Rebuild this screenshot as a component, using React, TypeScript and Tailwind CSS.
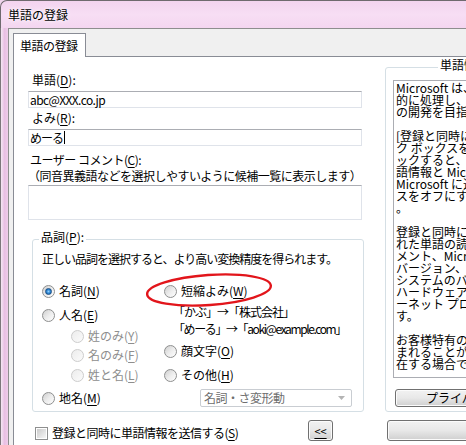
import clsx from "clsx";
import type { ReactNode } from "react";

// Windows 7 style "単語の登録" dialog (Microsoft IME), cropped at the right edge.

const infoLines = [
  "Microsoft は、送信された情報を統計",
  "的に処理し、その結果を品質向上や新機能",
  "の開発を目指します。",
  "",
  "[登録と同時に単語情報を送信する] チェッ",
  "ク ボックスをオンにして [登録] をクリ",
  "ックすると、単語の読み、単語、品詞の単",
  "語情報と Microsoft IME の情報が",
  "Microsoft に送信されます。チェック ボック",
  "スをオフにすれば情報は送信されません",
  "。",
  "",
  "登録と同時に送信される情報には、登録さ",
  "れた単語の読み、単語、品詞、ユーザー コ",
  "メント、Microsoft IME のバージョン、",
  "バージョン、使用している OS の",
  "システムのバージョン、コンピューターの",
  "ハードウェアの情報、およびインター",
  "ーネット プロトコル (IP) アドレスが含まれま",
  "す。",
  "",
  "お客様特有の情報が単語情報に含",
  "まれることがありますが、それらが存",
  "在する場合でも、個人を特定するために",
];

function U({ children }: { children: ReactNode }) {
  return <span className="underline decoration-1 underline-offset-[2px]">{children}</span>;
}

function Radio({ checked, disabled }: { checked?: boolean; disabled?: boolean }) {
  return (
    <span
      className={clsx(
        "flex h-[13px] w-[13px] shrink-0 items-center justify-center rounded-full border",
        disabled
          ? "border-[#cdcdcd] bg-linear-to-br from-[#ececec] to-[#fbfbfb]"
          : "border-[#8e8f8f] bg-linear-to-br from-[#cfcfcf] via-[#ececec] to-[#ffffff]"
      )}
    >
      {checked && (
        <span className="h-[7px] w-[7px] rounded-full border border-[#1b4f86] bg-radial from-[#8fd0ff] via-[#2b86d2] to-[#195ea6]" />
      )}
    </span>
  );
}

function Option({
  label,
  checked,
  disabled,
  className,
}: {
  label: ReactNode;
  checked?: boolean;
  disabled?: boolean;
  className?: string;
}) {
  return (
    <div className={clsx("flex h-[16px] items-center gap-[4px]", disabled && "text-[#8e8e8e]", className)}>
      <Radio checked={checked} disabled={disabled} />
      <span className="whitespace-nowrap">{label}</span>
    </div>
  );
}

function Field({ children, className }: { children?: ReactNode; className?: string }) {
  return (
    <div
      className={clsx(
        "flex h-[17px] w-[334px] items-center border border-[#dfe3ea] border-t-[#abadb3] bg-white pl-[1px] leading-[15px]",
        className
      )}
    >
      {children}
    </div>
  );
}

function Button({ children, className }: { children?: ReactNode; className?: string }) {
  return (
    <div
      className={clsx(
        "flex items-center justify-center rounded-[3px] border border-[#707070] bg-linear-to-b from-[#f2f2f2] via-[#e8e8e8] to-[#cfcfcf] shadow-[inset_0_0_0_1px_#fbfbfb]",
        className
      )}
    >
      {children}
    </div>
  );
}

export default function App() {
  return (
    <div className="relative h-[445px] w-[466px] overflow-hidden bg-[#efd4ec] text-[12px] leading-[16px] text-black font-['Noto_Sans_CJK_JP','Noto_Sans',sans-serif]">
      {/* title bar */}
      <div className="flex h-[28px] items-center rounded-tl-[7px] border-l border-t border-[#6f6a6e] bg-linear-to-b from-[#f3d4ef] via-[#f7def4] to-[#f4d6f0] pl-[7px]">
        <span className="[text-shadow:0_0_5px_#fff,0_0_2px_#fff]">単語の登録</span>
      </div>

      <div className="flex h-[417px]">
        <div className="w-[8px] shrink-0 border-l border-[#7d777b] bg-linear-to-r from-[#f5e7f3] via-[#e9bfe3] to-[#efcdea]" />
        <div className="flex min-w-0 flex-1 flex-col border-l border-t border-[#8e8e8e] bg-[#f0f0f0] pl-[4px] pt-[4px]">
          {/* tab strip */}
          <div className="flex">
            <div className="relative z-10 -mb-px flex h-[24px] items-center border border-b-0 border-[#898c95] bg-white pl-[6px] pr-[7px] tracking-[-0.5px]">
              単語の登録
            </div>
          </div>

          {/* tab page */}
          <div className="flex flex-1 border-l border-t border-[#898c95] bg-white pl-[14px]">
            {/* left column */}
            <div className="mt-[15px] w-[336px] shrink-0">
              <div className="h-[16px] pl-[4px]">
                単語(<U>D</U>):
              </div>
              <Field className="mt-[3px] tracking-[-0.6px]">abc@XXX.co.jp</Field>
              <div className="mt-[2px] h-[16px] pl-[4px]">
                よみ(<U>R</U>):
              </div>
              <Field className="mt-[3px] tracking-[-1px]">
                めーる<span className="ml-[1px] h-[13px] w-px bg-black" />
              </Field>
              <div className="mt-[6px] pl-[2px] tracking-[-0.5px]">
                ユーザー コメント(<U>C</U>):
              </div>
              <div className="whitespace-nowrap tracking-[-0.5px]">（同音異義語などを選択しやすいように候補一覧に表示します）</div>
              <div className="mt-[1px] h-[35px] w-[334px] border border-[#dfe3ea] border-t-[#abadb3] bg-white" />

              {/* 品詞 group */}
              <fieldset className="ml-[4px] mt-[9px] w-[332px] rounded-[3px] border border-[#d5dfe5]">
                <legend className="ml-[6px] px-[2px] pb-[5px] leading-[16px]">
                  品詞(<U>P</U>):
                </legend>
                <div className="pl-[9px] pt-[1px] pb-[4px]">
                  <div className="whitespace-nowrap tracking-[-1px]">正しい品詞を選択すると、より高い変換精度を得られます。</div>
                  <div className="mt-[16px] flex">
                    <div className="w-[122px] shrink-0">
                      <Option checked label={<>名詞(<U>N</U>)</>} />
                      <Option className="mt-[8px]" label={<>人名(<U>E</U>)</>} />
                      <Option className="ml-[29px] mt-[5px]" disabled label={<>姓のみ(<U>Y</U>)</>} />
                      <Option className="ml-[29px] mt-[3px]" disabled label={<>名のみ(<U>F</U>)</>} />
                      <Option className="ml-[29px] mt-[4px]" disabled label={<>姓と名(<U>L</U>)</>} />
                    </div>
                    <div>
                      <Option label={<>短縮よみ(<U>W</U>)</>} />
                      <div className="mt-[5px] whitespace-nowrap pl-[9px] tracking-[-1px]">「かぶ」→「株式会社」</div>
                      <div className="mt-[1px] whitespace-nowrap pl-[9px] tracking-[-1.4px]">「めーる」→「aoki@example.com」</div>
                      <Option className="mt-[6px]" label={<>顔文字(<U>O</U>)</>} />
                      <Option className="mt-[8px]" label={<>その他(<U>H</U>)</>} />
                    </div>
                  </div>
                  <div className="mt-[6px] flex h-[18px] items-center">
                    <Option className="w-[158px]" label={<>地名(<U>M</U>)</>} />
                    <div className="flex h-[18px] w-[152px] items-center justify-between rounded-[2px] border border-[#c9cdd2] bg-white pl-[3px] pr-[6px] text-[#6d6d6d]">
                      <span className="tracking-[-0.5px]">名詞・さ変形動</span>
                      <svg width="7" height="4" viewBox="0 0 7 4">
                        <path d="M0 0h7L3.5 4z" fill="#b4b4b4" />
                      </svg>
                    </div>
                  </div>
                </div>
              </fieldset>

              <div className="mt-[8px] flex h-[21px] items-start justify-between">
                <div className="ml-[7px] mt-[5px] flex h-[16px] items-center gap-[4px]">
                  <span className="flex h-[13px] w-[13px] items-center justify-center border border-[#8e8f8f] bg-white">
                    <span className="h-[9px] w-[9px] bg-linear-to-br from-[#cbcbcb] to-[#f6f6f6]" />
                  </span>
                  <span className="whitespace-nowrap tracking-[-0.5px]">
                    登録と同時に単語情報を送信する(<U>S</U>)
                  </span>
                </div>
                <Button className="mr-[31px] h-[21px] w-[25px] text-[11px]">
                  <U>&lt;&lt;</U>
                </Button>
              </div>
            </div>

            {/* right column */}
            <div className="ml-[21px] mt-[10px] w-[260px] shrink-0">
              <div className="relative rounded-[3px] border border-[#d5dfe5] pb-[4px] pl-[7px] pt-[12px]">
                <span className="absolute -top-[11px] left-[52px] whitespace-nowrap bg-white px-[2px] leading-[16px]">
                  単語情報の送信について
                </span>
                <div className="h-[298px] w-[250px] overflow-hidden border border-[#abadb3] bg-white pl-[2px] pt-px leading-[12px]">
                  {infoLines.map((line, i) => (
                    <div key={i} className="h-[12px] whitespace-nowrap">
                      {line}
                    </div>
                  ))}
                </div>
                <Button className="ml-[2px] mt-[11px] h-[18px] w-[206px]">プライバシーに関する声明</Button>
              </div>
              <Button className="ml-[2px] mt-[8px] h-[21px] w-[240px]" />
            </div>
          </div>
        </div>
      </div>

      {/* red annotation around 短縮よみ */}
      <svg className="pointer-events-none absolute left-0 top-0" width="466" height="445">
        <ellipse cx="209" cy="290" rx="62" ry="15" transform="rotate(-4 209 290)" fill="none" stroke="#e2151b" strokeWidth="2.4" />
      </svg>
    </div>
  );
}
